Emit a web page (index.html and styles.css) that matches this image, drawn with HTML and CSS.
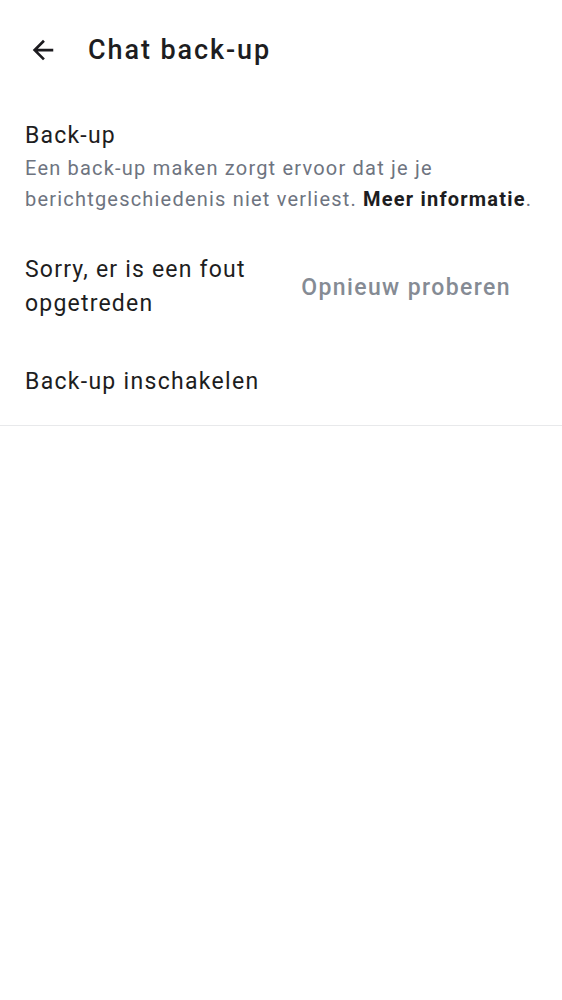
FILE: index.html
```html
<!DOCTYPE html>
<html>
<head>
<meta charset="utf-8">
<link rel="stylesheet" href="styles.css">
</head>
<body>
<div class="app">
  <header class="topbar">
    <span class="back">
      <svg width="30" height="30" viewBox="0 0 24 24"><path d="M20.2 10.9H7.9l5.6-5.6L12 3.8 3.8 12l8.2 8.2 1.5-1.5-5.6-5.6h12.3z" fill="#1c1b1f"/></svg>
    </span>
    <h1 class="title">Chat back-up</h1>
  </header>
  <section class="info">
    <div class="label">Back-up</div>
    <p class="desc">Een back-up maken zorgt ervoor dat je je berichtgeschiedenis niet verliest. <b class="link">Meer informatie</b>.</p>
  </section>
  <section class="error-row">
    <div class="error-text">Sorry, er is een fout opgetreden</div>
    <div class="retry">Opnieuw proberen</div>
  </section>
  <section class="enable">Back-up inschakelen</section>
</div>
</body>
</html>
```
FILE: styles.css
```css
html, body { margin: 0; padding: 0; background: #fff; }
body { font-family: Roboto, "Noto Sans", sans-serif; color: #1d1d21; }
.app { width: 562px; }
.topbar { display: flex; align-items: center; height: 100px; padding-left: 28px; box-sizing: border-box; }
.back { display: flex; width: 30px; height: 30px; margin-right: 30px; }
.title { margin: 0; font-size: 27px; font-weight: 500; letter-spacing: 1.9px; color: #1d1d21; }
.info { padding: 18px 25px 0 25px; }
.label { font-size: 23px; line-height: 35px; letter-spacing: 1.2px; }
.desc { margin: 0; font-size: 20px; line-height: 31px; letter-spacing: 1.2px; color: #6e7480; }
.link { color: #1d1d21; font-weight: 700; }
.error-row { display: flex; align-items: center; justify-content: space-between; padding: 38px 51px 0 25px; }
.error-text { font-size: 23px; line-height: 34px; letter-spacing: 1.2px; width: 250px; }
.retry { font-size: 23px; font-weight: 500; letter-spacing: 1.4px; color: #858b94; }
.enable { font-size: 23px; line-height: 34px; letter-spacing: 1.3px; padding: 44px 25px 26px; border-bottom: 1px solid #e8e9eb; }
```
